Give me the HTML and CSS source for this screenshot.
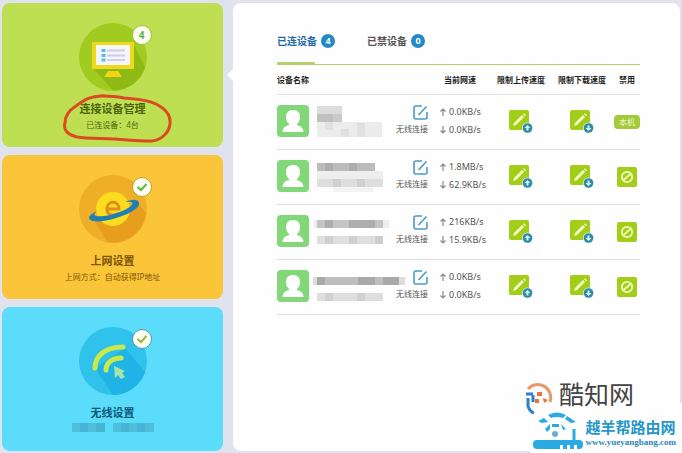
FILE: index.html
```html
<!DOCTYPE html>
<html lang="zh-CN">
<head>
    <meta charset="UTF-8">
    <meta name="viewport" content="width=device-width, initial-scale=1.0">
    <title>连接设备管理</title>
    <link rel="stylesheet" href="styles.css">
</head>
<body>
    <!-- shared icons -->
    <svg class="sprite" aria-hidden="true">
        <symbol id="avatar" viewBox="0 0 32 32">
            <rect width="32" height="32" rx="4" fill="#82d878"/>
            <path d="M16 5c5 0 7 3 7 7 0 3-1 5-3 7v1c3 1 6 2 6.500 7h-21C6 22 9 21 12 20v-1c-2-2-3-4-3-7 0-4 2-7 7-7z" fill="#fff"/>
        </symbol>
        <symbol id="edit" viewBox="0 0 15 15">
            <path d="M9 1H3a2 2 0 0 0-2 2v9a2 2 0 0 0 2 2h9a2 2 0 0 0 2-2V7M5.500 10L13.500 1.500" fill="none" stroke="#4a9cc8" stroke-width="1.600"/>
        </symbol>
        <symbol id="up" viewBox="0 0 6 8">
            <path d="M3 8V1M.5 3.500L3 1l2.500 2.500" fill="none" stroke="#8a8a8a" stroke-width="1.200"/>
        </symbol>
        <symbol id="down" viewBox="0 0 6 8">
            <path d="M3 0v7M.5 4.500L3 7l2.500-2.500" fill="none" stroke="#8a8a8a" stroke-width="1.200"/>
        </symbol>
        <symbol id="pencil" viewBox="0 0 24 24">
            <rect width="20" height="20" rx="2" fill="#a2ce19"/>
            <path d="M4 16l1-3 8-8 2 2-8 8zM14 4.200l1-.9 2 1.900-1 1z" fill="#f4fbc8"/>
            <circle cx="18.500" cy="18" r="5.500" fill="#e8f8f4"/>
            <circle cx="18.500" cy="18" r="4.800" fill="#2f8ba8"/>
        </symbol>
        <symbol id="limit-up" viewBox="0 0 24 24">
            <use href="#pencil"/>
            <path d="M18.500 15l3 3h-2v2.500h-2V18h-2z" fill="#d8f4f4"/>
        </symbol>
        <symbol id="limit-down" viewBox="0 0 24 24">
            <use href="#pencil"/>
            <path d="M18.500 21l3-3h-2v-2.500h-2V18h-2z" fill="#d8f4f4"/>
        </symbol>
        <symbol id="ban" viewBox="0 0 20 20">
            <rect width="20" height="20" rx="2" fill="#a2ce19"/>
            <circle cx="10" cy="10" r="5.200" fill="none" stroke="#f0fab8" stroke-width="1.800"/>
            <path d="M6.500 13L13.500 7" stroke="#f0fab8" stroke-width="1.800"/>
        </symbol>
    </svg>

    <div class="page">
        <nav class="sidebar">
            <a class="card card-devices" href="#devices">
                <span class="card-icon">
                    <svg width="68" height="68" viewBox="0 0 68 68" aria-hidden="true">
                        <circle cx="34" cy="34" r="34" fill="#a2cb22"/>
                        <path d="M14 45L34 67.500a34 34 0 0 0 32-23L54 20z" fill="#8dba14"/>
                        <rect x="13" y="19" width="42" height="27" rx="1" fill="#efd91c"/>
                        <rect x="17" y="22" width="34" height="20" fill="#f3f7fa"/>
                        <path d="M29 48h10l4 6H25z" fill="#f5d21a"/>
                        <path d="M28 27.500h18M28 32.500h18M28 37h18" stroke="#d3c9ea" stroke-width="2"/>
                        <path d="M22.500 27.500h4M22.500 32.500h4M22.500 37h4" stroke="#63b7ee" stroke-width="3"/>
                    </svg>
                    <span class="mark mark-count">4</span>
                </span>
                <span class="card-title">连接设备管理</span>
                <span class="card-note">已连设备：4台</span>
                <svg class="circled" width="112" height="52" viewBox="0 0 112 52" aria-hidden="true">
                    <path d="M42 5C30 4 22 9 14 15 6 20 3 26 3 32c-2 7 3 12 12 14 12 2 26 1 38 2 14 1 26 2 37 2 9-1 17-8 18-17 1-8-4-15-14-20C84 8 72 8 62 7 50 5 42 4 32 6" fill="none" stroke="#dc4a22" stroke-width="3" stroke-linecap="round"/>
                </svg>
            </a>
            <a class="card card-internet" href="#internet">
                <span class="card-icon">
                    <svg width="68" height="68" viewBox="0 0 68 68" aria-hidden="true">
                        <circle cx="34" cy="34" r="34" fill="#efae27"/>
                        <path d="M14 44l15 23.500A34 34 0 0 0 67 38L58 27z" fill="#e79e1c"/>
                        <circle cx="34" cy="34" r="17" fill="#fbdc1f"/>
                        <path d="M28 34h12c0-9-12-9-12 0 0 7 8 7 12 4" fill="none" stroke="#e08c1c" stroke-width="3"/>
                        <path d="M18 36C5 42 9 48 24 46c15-2 38-11 36-18-1-5-9-3-14-1 8-1 9 1 6 4-6 5-18 9-27 10-10 1-12-1-7-5z" fill="#1c80b4"/>
                    </svg>
                    <span class="mark">
                        <svg width="12" height="12" viewBox="0 0 12 12" aria-hidden="true"><path d="M1.500 6L5 9l5.500-6" fill="none" stroke="#58b848" stroke-width="2"/></svg>
                    </span>
                </span>
                <span class="card-title">上网设置</span>
                <span class="card-note">上网方式：自动获得IP地址</span>
            </a>
            <a class="card card-wifi" href="#wifi">
                <span class="card-icon">
                    <svg width="68" height="68" viewBox="0 0 68 68" aria-hidden="true">
                        <circle cx="34" cy="34" r="34" fill="#2fc2ea"/>
                        <path d="M16 41l18 27a34 34 0 0 0 32-23L46 21z" fill="#20b3e6"/>
                        <path d="M16 41c0-12 10-21 28-21M27 43c0-7 6-12 15-12" fill="none" stroke="#cbea4a" stroke-width="5" stroke-linecap="round"/>
                        <path d="M35 39l11 5-3 2 3 4-4 2-3-4-3 3z" fill="#a5e6a8"/>
                    </svg>
                    <span class="mark mark-wifi">
                        <svg width="12" height="12" viewBox="0 0 12 12" aria-hidden="true"><path d="M1.500 6L5 9l5.500-6" fill="none" stroke="#96b83a" stroke-width="2"/></svg>
                    </span>
                </span>
                <span class="card-title">无线设置</span>
                <svg class="card-mosaic" width="82" height="9" viewBox="0 0 82 9" aria-hidden="true">
                    <path d="M0 0h33v9H0zM41 0h41v9H41z" fill="#4fc0dc"/>
                    <path d="M8 0h8v9H8zM24 0h9v9h-9zM49 0h8v9h-8zM65 0h8v9h-8z" fill="#47b4d4"/>
                </svg>
            </a>
        </nav>

        <main class="panel">
            <div class="tabs">
                <button class="tab active" type="button">已连设备<span class="count">4</span></button>
                <button class="tab" type="button">已禁设备<span class="count">0</span></button>
            </div>
            <table class="devices">
                <thead>
                    <tr>
                        <th class="col-name" scope="col">设备名称</th>
                        <th class="col-link"></th>
                        <th class="col-speed" scope="col">当前网速</th>
                        <th class="col-up" scope="col">限制上传速度</th>
                        <th class="col-down" scope="col">限制下载速度</th>
                        <th class="col-ban" scope="col">禁用</th>
                    </tr>
                </thead>
                <tbody>
                    <tr>
                        <td>
                            <div class="device">
                                <svg class="avatar"><use href="#avatar"/></svg>
                                <svg class="mosaic" viewBox="0 0 92 32" aria-hidden="true">
                                    <path d="M4 1h25v8H4z" fill="#dcdcdc"/><path d="M4 9h25v8H4z" fill="#cacaca"/><path d="M4 9h16v8H4z" fill="#c0c0c0"/>
                                    <path d="M4 17h65v15H4z" fill="#ececec"/><path d="M12 17h8v8h-8zM28 24h8v8h-8zM44 18h8v14h-8z" fill="#e0e0e0"/>
                                </svg>
                            </div>
                        </td>
                        <td class="link"><button class="icon-btn" type="button" aria-label="编辑"><svg class="edit"><use href="#edit"/></svg></button><span>无线连接</span></td>
                        <td class="speed"><span><svg class="arrow"><use href="#up"/></svg>0.0KB/s</span><span><svg class="arrow"><use href="#down"/></svg>0.0KB/s</span></td>
                        <td class="action"><button class="icon-btn" type="button" aria-label="限制上传速度"><svg class="limit"><use href="#limit-up"/></svg></button></td>
                        <td class="action"><button class="icon-btn" type="button" aria-label="限制下载速度"><svg class="limit"><use href="#limit-down"/></svg></button></td>
                        <td class="action"><span class="self">本机</span></td>
                    </tr>
                    <tr>
                        <td>
                            <div class="device">
                                <svg class="avatar"><use href="#avatar"/></svg>
                                <svg class="mosaic" viewBox="0 0 92 32" aria-hidden="true">
                                    <path d="M4 3h58v8H4z" fill="#bcbcbc"/><path d="M12 3h8v8h-8zM36 3h8v8h-8z" fill="#adadad"/>
                                    <path d="M4 11h66v8H4z" fill="#eee"/><path d="M4 19h66v8H4z" fill="#dedede"/><path d="M20 19h8v8h-8zM44 19h8v8h-8z" fill="#cfcfcf"/><path d="M20 27h40v5H20z" fill="#f3f3f3"/>
                                </svg>
                            </div>
                        </td>
                        <td class="link"><button class="icon-btn" type="button" aria-label="编辑"><svg class="edit"><use href="#edit"/></svg></button><span>无线连接</span></td>
                        <td class="speed"><span><svg class="arrow"><use href="#up"/></svg>1.8MB/s</span><span><svg class="arrow"><use href="#down"/></svg>62.9KB/s</span></td>
                        <td class="action"><button class="icon-btn" type="button" aria-label="限制上传速度"><svg class="limit"><use href="#limit-up"/></svg></button></td>
                        <td class="action"><button class="icon-btn" type="button" aria-label="限制下载速度"><svg class="limit"><use href="#limit-down"/></svg></button></td>
                        <td class="action"><button class="icon-btn" type="button" aria-label="禁用"><svg class="ban"><use href="#ban"/></svg></button></td>
                    </tr>
                    <tr>
                        <td>
                            <div class="device">
                                <svg class="avatar"><use href="#avatar"/></svg>
                                <svg class="mosaic" viewBox="0 0 92 32" aria-hidden="true">
                                    <path d="M1 5h75v8H1z" fill="#eee"/><path d="M4 5h66v8H4z" fill="#c4c4c4"/><path d="M12 5h8v8h-8zM36 5h26v8H36z" fill="#adadad"/>
                                    <path d="M4 21h66v8H4z" fill="#dedede"/><path d="M12 21h8v8h-8zM36 21h8v8h-8zM62 21h8v8h-8z" fill="#cfcfcf"/>
                                </svg>
                            </div>
                        </td>
                        <td class="link"><button class="icon-btn" type="button" aria-label="编辑"><svg class="edit"><use href="#edit"/></svg></button><span>无线连接</span></td>
                        <td class="speed"><span><svg class="arrow"><use href="#up"/></svg>216KB/s</span><span><svg class="arrow"><use href="#down"/></svg>15.9KB/s</span></td>
                        <td class="action"><button class="icon-btn" type="button" aria-label="限制上传速度"><svg class="limit"><use href="#limit-up"/></svg></button></td>
                        <td class="action"><button class="icon-btn" type="button" aria-label="限制下载速度"><svg class="limit"><use href="#limit-down"/></svg></button></td>
                        <td class="action"><button class="icon-btn" type="button" aria-label="禁用"><svg class="ban"><use href="#ban"/></svg></button></td>
                    </tr>
                    <tr>
                        <td>
                            <div class="device">
                                <svg class="avatar"><use href="#avatar"/></svg>
                                <svg class="mosaic" viewBox="0 0 92 32" aria-hidden="true">
                                    <path d="M0 7h92v8H0z" fill="#ddd"/><path d="M4 7h82v8H4z" fill="#bebebe"/><path d="M4 7h8v8H4zM45 7h17v8H45zM70 7h16v8H70z" fill="#a9a9a9"/>
                                    <path d="M4 23h66v8H4z" fill="#dedede"/><path d="M12 23h8v8h-8zM44 23h8v8h-8z" fill="#d0d0d0"/>
                                </svg>
                            </div>
                        </td>
                        <td class="link"><button class="icon-btn" type="button" aria-label="编辑"><svg class="edit"><use href="#edit"/></svg></button><span>无线连接</span></td>
                        <td class="speed"><span><svg class="arrow"><use href="#up"/></svg>0.0KB/s</span><span><svg class="arrow"><use href="#down"/></svg>0.0KB/s</span></td>
                        <td class="action"><button class="icon-btn" type="button" aria-label="限制上传速度"><svg class="limit"><use href="#limit-up"/></svg></button></td>
                        <td class="action"><button class="icon-btn" type="button" aria-label="限制下载速度"><svg class="limit"><use href="#limit-down"/></svg></button></td>
                        <td class="action"><button class="icon-btn" type="button" aria-label="禁用"><svg class="ban"><use href="#ban"/></svg></button></td>
                    </tr>
                </tbody>
            </table>
        </main>
    </div>

    <!-- watermarks -->
    <div class="watermark">
        <div class="brand">
            <svg width="32" height="36" viewBox="0 0 32 36" aria-hidden="true">
                <path d="M3 13h7M5 17v8q2 6 6 7M10 14v7" fill="none" stroke="#2b7fd0" stroke-width="3"/>
                <path d="M5 8a13 13 0 0 1 22 13" fill="none" stroke="#e59a68" stroke-width="3"/>
                <path d="M14 11h5v4h-5zM12 18h4v4h-4zM20 17l5 2-4 3z" fill="#e8733c"/>
            </svg>
            <span>酷知网</span>
        </div>
        <div class="site">
            <svg width="50" height="38" viewBox="0 0 50 38" aria-hidden="true">
                <path d="M5 9l6-3 4 4-6 1zM15 3q9-5 18 0l-3 3q-7-2-12 0zM34 4l9 6-5 1-6-4z" fill="#29abe2"/>
                <path d="M12 17l5-5v5l-3 3zM19 12h7v3h-7zM28 12l5 5-3 1z" fill="#29abe2"/>
                <circle cx="22" cy="22" r="3" fill="#6aaee0"/>
                <path d="M41 17v12" stroke="#29abe2" stroke-width="3"/>
                <rect y="28" width="50" height="9" rx="4" fill="#29abe2"/>
                <path d="M27 35h3M34 35h3M41 35h3" stroke="#fff" stroke-width="4"/>
            </svg>
            <div class="site-text">
                <span class="site-name">越羊帮路由网</span>
                <span class="site-url">www.yueyangbang.com</span>
            </div>
        </div>
    </div>
</body>
</html>
```
FILE: styles.css
```css
* {
    box-sizing: border-box;
}
body {
    margin: 0;
    background: #e0e2ee;
    font-family: "Noto Sans", "Noto Sans CJK SC", sans-serif;
    font-size: 8px;
    color: #333;
}
.sprite {
    position: absolute;
    width: 0;
    height: 0;
}
.page {
    display: flex;
    gap: 10px;
    min-height: 100vh;
    padding: 3px 2px 2px;
}

/* left cards */
.sidebar {
    flex: 0 0 221px;
    display: flex;
    flex-direction: column;
    gap: 8px;
}
.card {
    position: relative;
    flex: 1;
    display: flex;
    flex-direction: column;
    align-items: center;
    padding-top: 20px;
    border-radius: 8px;
    text-decoration: none;
}
.card-devices {
    background: #bfdf52;
    color: #4c6410;
}
.card-internet {
    background: #fac539;
    color: #7c5608;
}
.card-wifi {
    background: #5bdcfa;
    color: #0d5a78;
}
.card-icon {
    position: relative;
    height: 68px;
}
.mark {
    position: absolute;
    top: 2px;
    right: -5px;
    display: flex;
    align-items: center;
    justify-content: center;
    width: 20px;
    height: 20px;
    border: 1px solid #b5a52c;
    border-radius: 50%;
    background: #fdfef0;
}
.mark-count {
    border-color: #9cc23c;
    color: #5cb050;
    font-size: 10px;
    font-weight: bold;
}
.mark-wifi {
    border-color: #4c9cb8;
}
.card-title {
    margin-top: 10px;
    font-size: 11px;
    font-weight: bold;
    line-height: 16px;
}
.card-note {
    line-height: 16px;
}
.card-mosaic {
    margin-top: 2px;
}
.circled {
    position: absolute;
    top: 88px;
    left: 60px;
}

/* device list */
.panel {
    position: relative;
    flex: 1;
    padding: 24px 40px 0 44px;
    border-radius: 8px;
    background: #fefefe;
}
.panel::before {
    content: "";
    position: absolute;
    top: 66px;
    left: -6px;
    border: 6px solid transparent;
    border-left: 0;
    border-right-color: #fefefe;
}
.tabs {
    display: flex;
    gap: 32px;
    border-bottom: 1px solid #b5d06c;
}
.tab {
    display: flex;
    align-items: center;
    gap: 4px;
    height: 37px;
    padding: 0 0 10px;
    border: 0;
    background: none;
    color: #555;
    font-family: inherit;
    font-size: 10px;
    font-weight: bold;
}
.tab.active {
    background: linear-gradient(#b5d06c, #b5d06c) left bottom / 38px 2px no-repeat;
    color: #1d6aa5;
}
.count {
    width: 14px;
    height: 14px;
    border-radius: 50%;
    background: #2288c8;
    color: #fff;
    font-size: 9px;
    line-height: 14px;
    text-align: center;
}
.devices {
    width: 100%;
    border-collapse: collapse;
    table-layout: fixed;
}
.devices th {
    height: 29px;
    padding: 0;
    border-bottom: 1px solid #e4e4e4;
    color: #222;
    font-size: 8px;
    white-space: nowrap;
}
.devices .col-name {
    text-align: left;
}
.col-link {
    width: 39px;
}
.col-speed {
    width: 64px;
}
.col-up {
    width: 58px;
}
.col-down {
    width: 64px;
}
.col-ban {
    width: 26px;
}
.devices td {
    height: 55px;
    padding: 0 0 2px;
    border-bottom: 1px solid #dcdcdc;
}
.device {
    display: flex;
    gap: 4px;
}
.avatar {
    flex: none;
    width: 32px;
    height: 32px;
}
.mosaic {
    flex: none;
    width: 92px;
    height: 32px;
}
.icon-btn {
    display: inline-flex;
    padding: 0;
    border: 0;
    background: none;
    vertical-align: top;
    cursor: pointer;
}
.edit {
    width: 15px;
    height: 15px;
}
.link {
    text-align: right;
    white-space: nowrap;
}
.link span {
    display: block;
    padding-top: 1px;
    line-height: 16px;
    color: #555;
}
.speed {
    color: #555;
    font-size: 9px;
}
.speed span {
    display: flex;
    align-items: center;
    gap: 3px;
    padding-left: 12px;
    line-height: 18px;
}
.arrow {
    width: 6px;
    height: 8px;
}
.devices .action {
    padding-bottom: 0;
    text-align: center;
}
.limit {
    width: 24px;
    height: 24px;
}
.ban {
    width: 20px;
    height: 20px;
}
.self {
    display: block;
    border-radius: 4px;
    background: #a3c93c;
    color: #f4fbd8;
    line-height: 14px;
}

/* watermarks */
.watermark {
    position: absolute;
    right: 0;
    bottom: 0;
    display: flex;
    flex-direction: column;
    align-items: flex-end;
}
.brand {
    position: relative;
    z-index: 1;
    display: flex;
    gap: 4px;
    height: 22px;
    padding-right: 48px;
    color: #444;
    font-size: 25px;
    line-height: 26px;
}
.site {
    display: flex;
    gap: 2px;
    padding: 9px 6px 3px 3px;
    background: #fefefe;
}
.site-text {
    display: flex;
    flex-direction: column;
    padding-top: 6px;
}
.site-name {
    color: #2496c8;
    font-size: 15px;
    font-weight: bold;
    line-height: 18px;
}
.site-url {
    color: #2a86b4;
    font-family: "Liberation Serif", serif;
    font-size: 9px;
    font-weight: bold;
    line-height: 12px;
}
```
